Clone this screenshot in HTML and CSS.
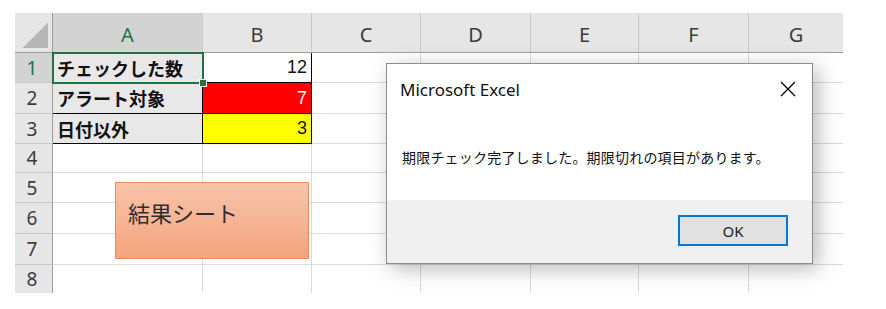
FILE: index.html
```html
<!DOCTYPE html>
<html lang="ja">
<head>
<meta charset="utf-8">
<link rel="stylesheet" href="styles.css">
</head>
<body>
<div class="sheet">
  <div class="grid">
    <div class="corner"><div class="tri"></div></div>
    <div class="ch sel">A</div>
    <div class="ch">B</div>
    <div class="ch">C</div>
    <div class="ch">D</div>
    <div class="ch">E</div>
    <div class="ch">F</div>
    <div class="ch last">G</div>

    <div class="rh sel">1</div>
    <div class="c lab active">チェックした数</div>
    <div class="c num tb">12</div>
    <div class="c"></div><div class="c"></div><div class="c"></div><div class="c"></div><div class="c last"></div>

    <div class="rh">2</div>
    <div class="c lab">アラート対象</div>
    <div class="c num tb red">7</div>
    <div class="c"></div><div class="c"></div><div class="c"></div><div class="c"></div><div class="c last"></div>

    <div class="rh">3</div>
    <div class="c lab">日付以外</div>
    <div class="c num tb yellow">3</div>
    <div class="c"></div><div class="c"></div><div class="c"></div><div class="c"></div><div class="c last"></div>

    <div class="rh">4</div>
    <div class="c"></div><div class="c"></div><div class="c"></div><div class="c"></div><div class="c"></div><div class="c"></div><div class="c last"></div>

    <div class="rh">5</div>
    <div class="c"></div><div class="c"></div><div class="c"></div><div class="c"></div><div class="c"></div><div class="c"></div><div class="c last"></div>

    <div class="rh">6</div>
    <div class="c"></div><div class="c"></div><div class="c"></div><div class="c"></div><div class="c"></div><div class="c"></div><div class="c last"></div>

    <div class="rh">7</div>
    <div class="c"></div><div class="c"></div><div class="c"></div><div class="c"></div><div class="c"></div><div class="c"></div><div class="c last"></div>

    <div class="rh end">8</div>
    <div class="c end"></div><div class="c end"></div><div class="c end"></div><div class="c end"></div><div class="c end"></div><div class="c end"></div><div class="c end last"></div>
  </div>

  <div class="shape">結果シート</div>

  <div class="dialog">
    <div class="dlg-title">
      <span class="dlg-name">Microsoft Excel</span>
      <svg class="dlg-close" width="16" height="16" viewBox="0 0 16 16"><path d="M1 1 L15 15 M15 1 L1 15" stroke="#000" stroke-width="1.3" fill="none"/></svg>
    </div>
    <div class="dlg-body">期限チェック完了しました。期限切れの項目があります。</div>
    <div class="dlg-foot">
      <div class="btn">OK</div>
    </div>
  </div>
</div>
</body>
</html>
```
FILE: styles.css
```css
html, body {
  margin: 0;
  padding: 0;
  background: #ffffff;
}

.sheet {
  position: relative;
  margin: 13px 0 0 15px;
  width: 828px;
}

.grid {
  display: grid;
  grid-template-columns: 38px 150px 109px 109px 110px 108px 110px 94px;
  grid-template-rows: 40px 30px 31px 30px 29px 30px 31px 31px 28px;
}

.grid > div {
  box-sizing: border-box;
}

.corner {
  background: #e6e6e6;
  border-right: 1px solid #9e9e9e;
  border-bottom: 1px solid #9e9e9e;
  display: flex;
  justify-content: flex-end;
  align-items: flex-end;
  padding: 0 4px 4px 0;
}

.tri {
  width: 25px;
  height: 25px;
  background: linear-gradient(to bottom right, transparent 50%, #b6b6b6 50%);
}

.ch {
  background: #e6e6e6;
  border-right: 1px solid #c9c9c9;
  border-bottom: 1px solid #9e9e9e;
  display: flex;
  align-items: center;
  justify-content: center;
  padding-top: 3px;
  font-family: "Noto Sans", "Liberation Sans", sans-serif;
  font-size: 20px;
  color: #3c3c3c;
}

.ch.last {
  border-right: none;
}

.ch.sel, .rh.sel {
  background: #d3d3d3;
  color: #217346;
}

.rh {
  background: #e6e6e6;
  border-right: 1px solid #9e9e9e;
  border-bottom: 1px solid #c9c9c9;
  display: flex;
  align-items: center;
  justify-content: center;
  font-family: "Noto Sans", "Liberation Sans", sans-serif;
  font-size: 19px;
  color: #3c3c3c;
  padding-right: 3px;
}

.rh.end {
  border-bottom: none;
}

.c {
  background: #ffffff;
  border-right: 1px solid #dadada;
  border-bottom: 1px solid #dadada;
}

.c.last {
  border-right: none;
}

.c.end {
  border-bottom: none;
}

.c.lab {
  background: #e8e8e8;
  border-right: 1px solid #000;
  border-bottom: 1px solid #000;
  display: flex;
  align-items: center;
  padding-left: 4px;
  font-family: "Noto Sans CJK JP", sans-serif;
  font-weight: 700;
  font-size: 18px;
  color: #111;
}

.c.num {
  display: flex;
  align-items: center;
  justify-content: flex-end;
  padding-right: 4px;
  font-family: "Liberation Sans", sans-serif;
  font-size: 18px;
  color: #111;
}

.c.tb {
  border-right: 1px solid #000;
  border-bottom: 1px solid #000;
}

.c.red {
  background: #ff0000;
  color: #ffffff;
}

.c.yellow {
  background: #ffff00;
}

.c.active {
  position: relative;
}

.c.active::before {
  content: "";
  position: absolute;
  left: -1px;
  top: -1px;
  right: -2px;
  bottom: -2px;
  border: 2px solid #217346;
}

.c.active::after {
  content: "";
  position: absolute;
  right: -5px;
  bottom: -5px;
  width: 6px;
  height: 6px;
  background: #217346;
  border: 1px solid #ffffff;
}

.shape {
  position: absolute;
  left: 100px;
  top: 169px;
  width: 194px;
  height: 77px;
  box-sizing: border-box;
  border: 1px solid #ec8a5c;
  background: linear-gradient(to bottom, #f8c4ab, #f4a47e);
  padding: 14px 12px;
  font-family: "Noto Sans CJK JP", sans-serif;
  font-size: 22px;
  line-height: 30px;
  color: #2e2e2e;
}

.dialog {
  position: absolute;
  left: 371px;
  top: 50px;
  width: 427px;
  height: 201px;
  box-sizing: border-box;
  border: 1px solid #8c8c8c;
  background: #ffffff;
  box-shadow: 5px 5px 20px rgba(0, 0, 0, 0.28);
  display: flex;
  flex-direction: column;
}

.dlg-title {
  height: 50px;
  display: flex;
  align-items: center;
  justify-content: space-between;
  padding: 0 16px 0 13px;
  font-family: "Noto Sans", "Open Sans", sans-serif;
  font-size: 17px;
  color: #111;
}

.dlg-close {
  display: block;
}

.dlg-body {
  flex: 1;
  display: flex;
  align-items: center;
  padding-left: 15px;
  font-family: "Noto Sans CJK JP", sans-serif;
  font-size: 14px;
  letter-spacing: 0.2px;
  color: #111;
}

.dlg-foot {
  height: 63px;
  background: #f0f0f0;
  display: flex;
  justify-content: flex-end;
  align-items: flex-start;
  padding: 15px 24px 0 0;
  box-sizing: border-box;
}

.btn {
  width: 110px;
  height: 31px;
  box-sizing: border-box;
  border: 2px solid #0078d7;
  background: #e1e1e1;
  display: flex;
  align-items: center;
  justify-content: center;
  font-family: "Noto Sans", "Open Sans", sans-serif;
  font-size: 15px;
  color: #222;
}
```
